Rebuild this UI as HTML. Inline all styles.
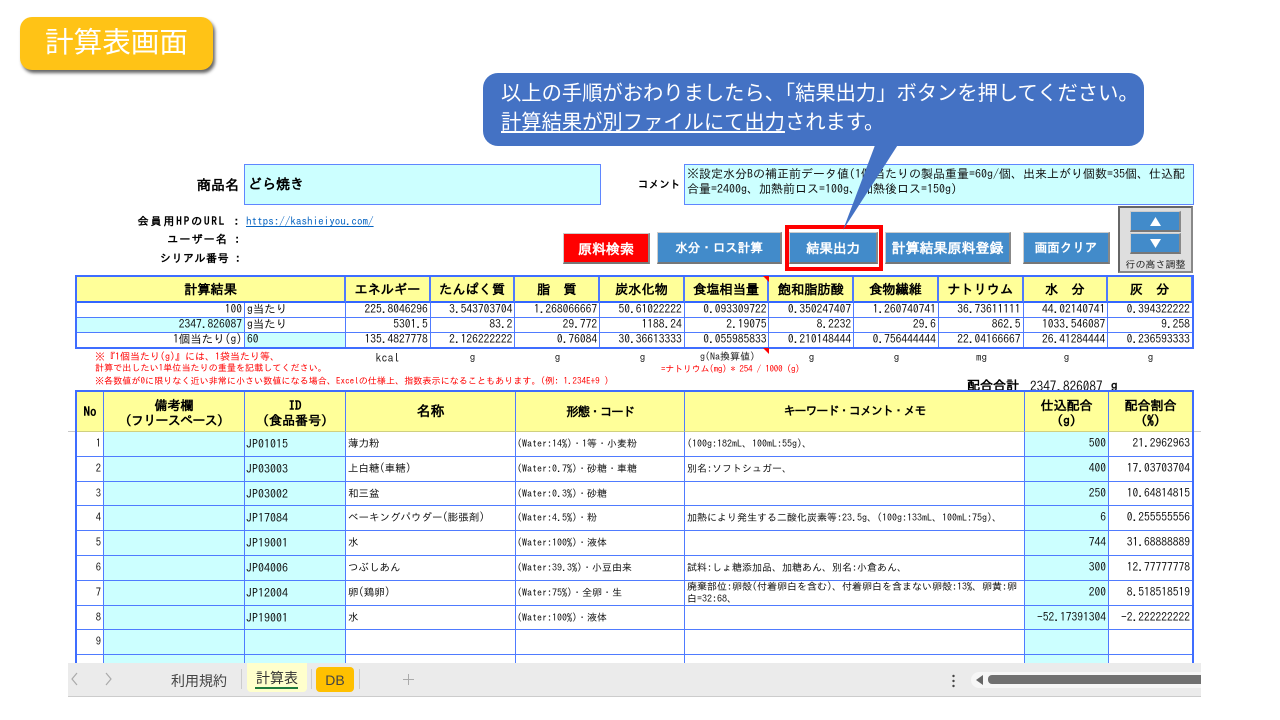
<!DOCTYPE html>
<html lang="ja"><head><meta charset="utf-8"><title>計算表画面</title>
<style>
html,body{margin:0;padding:0;background:#fff;width:1280px;height:720px;overflow:hidden}
body{position:relative;font-family:"IPAGothic","Liberation Sans","Noto Sans CJK JP",sans-serif;color:#111}
.a{position:absolute;white-space:nowrap}
.n{font-family:"Liberation Sans","Noto Sans CJK JP",sans-serif}
.g{position:absolute;display:grid;background:#fff}
.g div{box-sizing:border-box;border-right:1px solid #4f7bff;border-bottom:1px solid #4f7bff;white-space:nowrap;overflow:hidden;padding:0 2px;font-size:11.5px}
#t1{left:77px;top:276px;width:1116px;height:72px;grid-template-columns:168px 101px repeat(10,84.7px);grid-template-rows:27px 15px 15px 15px}
#t1 div{line-height:14px}
#t2{left:77px;top:391px;width:1116px;height:272px;overflow:hidden;grid-template-columns:27px 141px 101px 170px 169px 340px 84px 84px;grid-template-rows:41px repeat(10,24.8px)}
#t2 div{line-height:24px;font-size:10.5px}
.g .y{background:#ffff99;text-align:center;font-weight:bold;font-size:13.2px;line-height:26px;color:#000}
#t1 .y{line-height:27px;border-right-width:2px;border-bottom-width:2px;border-bottom-color:#3366ff}
#t2 .y{line-height:15px;display:flex;align-items:center;justify-content:center;border-bottom-color:#d0d080;font-size:13px;padding:0}
#t2 .y.w{font-size:14px}
#t2 .id{font-size:12px;padding-left:1px}
#t2 .m{font-size:10px;padding-left:1px}
#t2 .k{font-size:10px}
#t2 .v{font-size:11.5px}
.g .c{background:#ccffff}
.g .r{text-align:right}
.ot{position:absolute;box-sizing:border-box;border:2px solid #3f6dff;pointer-events:none}
.btn{position:absolute;box-sizing:border-box;background:#428bca;color:#fff;font-weight:bold;font-size:12.5px;text-align:center;line-height:30px;border-bottom:2px solid #777;border-right:2px solid #888;border-top:1px solid #ccc;border-left:1px solid #ccc;white-space:nowrap}
.u{font-size:11px;color:#222;top:352px;text-align:center;width:85px}
.red{color:#ff0000;font-size:10px;left:95px}
.lab{font-weight:bold;font-size:11px;color:#000;text-align:right;width:200px;left:41px}
</style></head><body>

<div class="a n" style="left:20px;top:17px;width:193px;height:53px;border-radius:12px;background:#ffc316;box-shadow:2px 3px 3px #666;color:#fff;font-size:28.6px;line-height:52px;text-align:center">計算表画面</div>

<div class="a" style="left:197px;top:178px;font-weight:bold;font-size:14px;color:#000">商品名</div>
<div class="a" style="left:244px;top:164px;width:357px;height:41px;box-sizing:border-box;background:#ccffff;border:1px solid #5f86ff;font-weight:bold;font-size:14px;line-height:38px;padding-left:3px;color:#000">どら焼き</div>
<div class="a" style="left:638px;top:180px;font-weight:bold;font-size:10.6px;color:#000">コメント</div>
<div class="a" style="left:684px;top:164px;width:510px;height:41px;box-sizing:border-box;background:#ccffff;border:1px solid #5f86ff;font-size:12px;line-height:15px;padding:2px 2px;white-space:normal;word-break:break-all">※設定水分Bの補正前データ値(1個当たりの製品重量=60g/個、出来上がり個数=35個、仕込配合量=2400g、加熱前ロス=100g、加熱後ロス=150g)</div>

<div class="a lab" style="top:216px;letter-spacing:1.9px">会員用HPのURL :</div>
<div class="a lab" style="top:234px;letter-spacing:1.1px">ユーザー名 :</div>
<div class="a lab" style="top:253px;letter-spacing:.5px">シリアル番号 :</div>
<div class="a" style="left:246px;top:216px;font-size:11.1px;color:#0563c1;text-decoration:underline">https://kashieiyou.com/</div>

<div class="btn" style="left:563px;top:233px;width:87px;height:31px;background:#ff0000;font-size:14px">原料検索</div>
<div class="btn" style="left:657px;top:232px;width:125px;height:32px">水分・ロス計算</div>
<div class="btn" style="left:789px;top:232px;width:89px;height:32px;font-size:13.5px">結果出力</div>
<div class="btn" style="left:885px;top:232px;width:126px;height:32px;font-size:14px">計算結果原料登録</div>
<div class="btn" style="left:1023px;top:232px;width:87px;height:32px">画面クリア</div>
<div class="a" style="left:785px;top:225px;width:98px;height:46px;box-sizing:border-box;border:4px solid #ff0000"></div>

<div class="a" style="left:1118px;top:206px;width:75px;height:67px;box-sizing:border-box;background:#dedede;border:2px solid #666;border-right-color:#888;border-bottom-color:#888"></div>
<div class="btn" style="left:1130px;top:211px;width:51px;height:21px"></div>
<div class="btn" style="left:1130px;top:233px;width:51px;height:21px"></div>
<svg class="a" style="left:1130px;top:211px" width="51" height="44"><path d="M25.5 6 31 15H20Z" fill="#fff"/><path d="M20 28H31L25.5 37Z" fill="#fff"/></svg>
<div class="a" style="left:1118px;top:260px;width:75px;text-align:center;font-size:10px;color:#222">行の高さ調整</div>

<div class="g" id="t1">
<div class="y" style="grid-column:span 2">計算結果</div><div class="y">エネルギー</div><div class="y">たんぱく質</div><div class="y">脂　質</div><div class="y">炭水化物</div><div class="y">食塩相当量</div><div class="y">飽和脂肪酸</div><div class="y">食物繊維</div><div class="y">ナトリウム</div><div class="y">水　分</div><div class="y">灰　分</div>
<div class="r">100</div><div>g当たり</div><div class="r">225.8046296</div><div class="r">3.543703704</div><div class="r">1.268066667</div><div class="r">50.61022222</div><div class="r">0.093309722</div><div class="r">0.350247407</div><div class="r">1.260740741</div><div class="r">36.73611111</div><div class="r">44.02140741</div><div class="r">0.394322222</div>
<div class="r c">2347.826087</div><div>g当たり</div><div class="r">5301.5</div><div class="r">83.2</div><div class="r">29.772</div><div class="r">1188.24</div><div class="r">2.19075</div><div class="r">8.2232</div><div class="r">29.6</div><div class="r">862.5</div><div class="r">1033.546087</div><div class="r">9.258</div>
<div class="r">1個当たり(g)</div><div class="c">60</div><div class="r">135.4827778</div><div class="r">2.126222222</div><div class="r">0.76084</div><div class="r">30.36613333</div><div class="r">0.055985833</div><div class="r">0.210148444</div><div class="r">0.756444444</div><div class="r">22.04166667</div><div class="r">26.41284444</div><div class="r">0.236593333</div>
</div>
<div class="ot" style="left:75px;top:275px;width:1119px;height:74px"></div>
<svg class="a" style="left:762px;top:275px" width="10" height="80"><path d="M1 1H7V7Z" fill="#f00"/><path d="M1 73H7V79Z" fill="#f00"/></svg>

<div class="a red" style="top:352px">※『1個当たり(g)』には、1袋当たり等、</div>
<div class="a red" style="top:364px;font-size:9.1px">計算で出したい1単位当たりの重量を記載してください。</div>
<div class="a red" style="top:377px;font-size:9.1px">※各数値が0に限りなく近い非常に小さい数値になる場合、Excelの仕様上、指数表示になることもあります。(例: 1.234E+9 )</div>
<div class="a red" style="left:661px;top:365px;font-size:9px;letter-spacing:-.2px">=ナトリウム(mg) * 254 / 1000 (g)</div>
<div class="a u" style="left:345px;font-size:12px">kcal</div><div class="a u" style="left:430px">g</div><div class="a u" style="left:515px">g</div><div class="a u" style="left:600px">g</div><div class="a u" style="left:685px;font-size:10px">g(Na換算値)</div><div class="a u" style="left:769px">g</div><div class="a u" style="left:854px">g</div><div class="a u" style="left:939px">mg</div><div class="a u" style="left:1024px">g</div><div class="a u" style="left:1108px">g</div>

<div class="a" style="left:967px;top:379px;font-weight:bold;font-size:13px;color:#000">配合合計</div>
<div class="a" style="left:1030px;top:379px;font-size:13.2px">2347.826087</div>
<div class="a" style="left:1111px;top:379px;font-weight:bold;font-size:13px">g</div>

<div class="a" style="left:68px;top:431px;width:1133px;height:1px;background:#c8c8c8"></div>

<div class="g" id="t2">
<div class="y">No</div><div class="y" style="padding-top:3px"><span>備考欄<br><span style="letter-spacing:-.7px">(フリースペース)</span></span></div><div class="y" style="padding-top:3px"><span>ID<br>(食品番号)</span></div><div class="y w">名称</div><div class="y" style="font-size:12.5px;letter-spacing:-1.3px">形態・コード</div><div class="y" style="font-size:12px;letter-spacing:-1.1px">キーワード・コメント・メモ</div><div class="y" style="padding-top:3px"><span>仕込配合<br>(g)</span></div><div class="y" style="padding-top:3px"><span>配合割合<br>(%)</span></div>
<div class="r">1</div><div class="c"></div><div class="c id">JP01015</div><div>薄力粉</div><div class="m">(Water:14%)・1等・小麦粉</div><div class="k">(100g:182mL、100mL:55g)、</div><div class="r c v">500</div><div class="r v">21.2962963</div>
<div class="r">2</div><div class="c"></div><div class="c id">JP03003</div><div>上白糖(車糖)</div><div class="m">(Water:0.7%)・砂糖・車糖</div><div class="k">別名:ソフトシュガー、</div><div class="r c v">400</div><div class="r v">17.03703704</div>
<div class="r">3</div><div class="c"></div><div class="c id">JP03002</div><div>和三盆</div><div class="m">(Water:0.3%)・砂糖</div><div></div><div class="r c v">250</div><div class="r v">10.64814815</div>
<div class="r">4</div><div class="c"></div><div class="c id">JP17084</div><div>ベーキングパウダー(膨張剤)</div><div class="m">(Water:4.5%)・粉</div><div class="k">加熱により発生する二酸化炭素等:23.5g、(100g:133mL、100mL:75g)、</div><div class="r c v">6</div><div class="r v">0.255555556</div>
<div class="r">5</div><div class="c"></div><div class="c id">JP19001</div><div>水</div><div class="m">(Water:100%)・液体</div><div></div><div class="r c v">744</div><div class="r v">31.68888889</div>
<div class="r">6</div><div class="c"></div><div class="c id">JP04006</div><div>つぶしあん</div><div class="m">(Water:39.3%)・小豆由来</div><div class="k">試料:しょ糖添加品、加糖あん、別名:小倉あん、</div><div class="r c v">300</div><div class="r v">12.77777778</div>
<div class="r">7</div><div class="c"></div><div class="c id">JP12004</div><div>卵(鶏卵)</div><div class="m">(Water:75%)・全卵・生</div><div class="k" style="line-height:12px">廃棄部位:卵殻(付着卵白を含む)、付着卵白を含まない卵殻:13%、卵黄:卵<br>白=32:68、</div><div class="r c v">200</div><div class="r v">8.518518519</div>
<div class="r">8</div><div class="c"></div><div class="c id">JP19001</div><div>水</div><div class="m">(Water:100%)・液体</div><div></div><div class="r c v">-52.17391304</div><div class="r v">-2.222222222</div>
<div class="r">9</div><div class="c"></div><div class="c"></div><div></div><div></div><div></div><div class="c"></div><div></div>
<div></div><div class="c"></div><div class="c"></div><div></div><div></div><div></div><div class="c"></div><div></div>
</div>
<div class="ot" style="left:75px;top:390px;width:1119px;height:280px"></div>

<div class="a" style="left:68px;top:663px;width:1133px;height:34px;background:#ebebeb;border-bottom:1px solid #ccc;box-sizing:border-box"></div>
<svg class="a" style="left:68px;top:670px" width="50" height="18" fill="none" stroke="#aaa" stroke-width="1.2"><path d="M9 3 4 9 9 15"/><path d="M38 3 43 9 38 15"/></svg>
<div class="a n" style="left:171px;top:671px;font-size:14px;color:#444">利用規約</div>
<div class="a" style="left:241px;top:669px;width:1px;height:20px;background:#ccc"></div>
<div class="a" style="left:247px;top:663px;width:60px;height:29px;background:#ffffcc;border-radius:0 0 4px 4px"></div>
<div class="a n" style="left:256px;top:668px;font-size:14px;color:#333">計算表</div>
<div class="a" style="left:255px;top:687px;width:43px;height:2px;background:#1e7a3c"></div>
<div class="a" style="left:311px;top:669px;width:1px;height:20px;background:#ccc"></div>
<div class="a n" style="left:316px;top:667px;width:38px;height:25px;border-radius:4px;background:#ffc000;text-align:center;line-height:26px;font-size:14px;color:#444">DB</div>
<div class="a" style="left:359px;top:669px;width:1px;height:20px;background:#ccc"></div>
<svg class="a" style="left:402px;top:673px" width="13" height="13" stroke="#aaa" stroke-width="1"><path d="M6.5 1V12M1 6.5H12"/></svg>
<svg class="a" style="left:951px;top:674px" width="5" height="14" fill="#444"><circle cx="2.5" cy="2" r="1.2"/><circle cx="2.5" cy="7" r="1.2"/><circle cx="2.5" cy="12" r="1.2"/></svg>
<div class="a" style="left:971px;top:672px;width:230px;height:16px;background:#f6f6f6;border-radius:8px 0 0 8px"></div>
<svg class="a" style="left:975px;top:675px" width="9" height="10"><path d="M1 5 8 0V10Z" fill="#666"/></svg>
<div class="a" style="left:988px;top:675px;width:213px;height:9px;background:#707070;border-radius:4px 0 0 4px"></div>

<div class="a" style="left:1201px;top:0;width:79px;height:720px;background:#fff"></div>

<svg class="a" style="left:840px;top:140px" width="70" height="95"><path d="M37 0H61L3 90Z" fill="#4472c4"/></svg>
<div class="a n" style="left:483px;top:73px;width:661px;height:73px;border-radius:15px;background:#4472c4;color:#fff;font-size:20.3px;line-height:29px;box-sizing:border-box;padding:7px 0 0 18px">以上の手順がおわりましたら、「結果出力」ボタンを押してください。<br><span style="text-decoration:underline">計算結果が別ファイルにて出力</span>されます。</div>
</body></html>
